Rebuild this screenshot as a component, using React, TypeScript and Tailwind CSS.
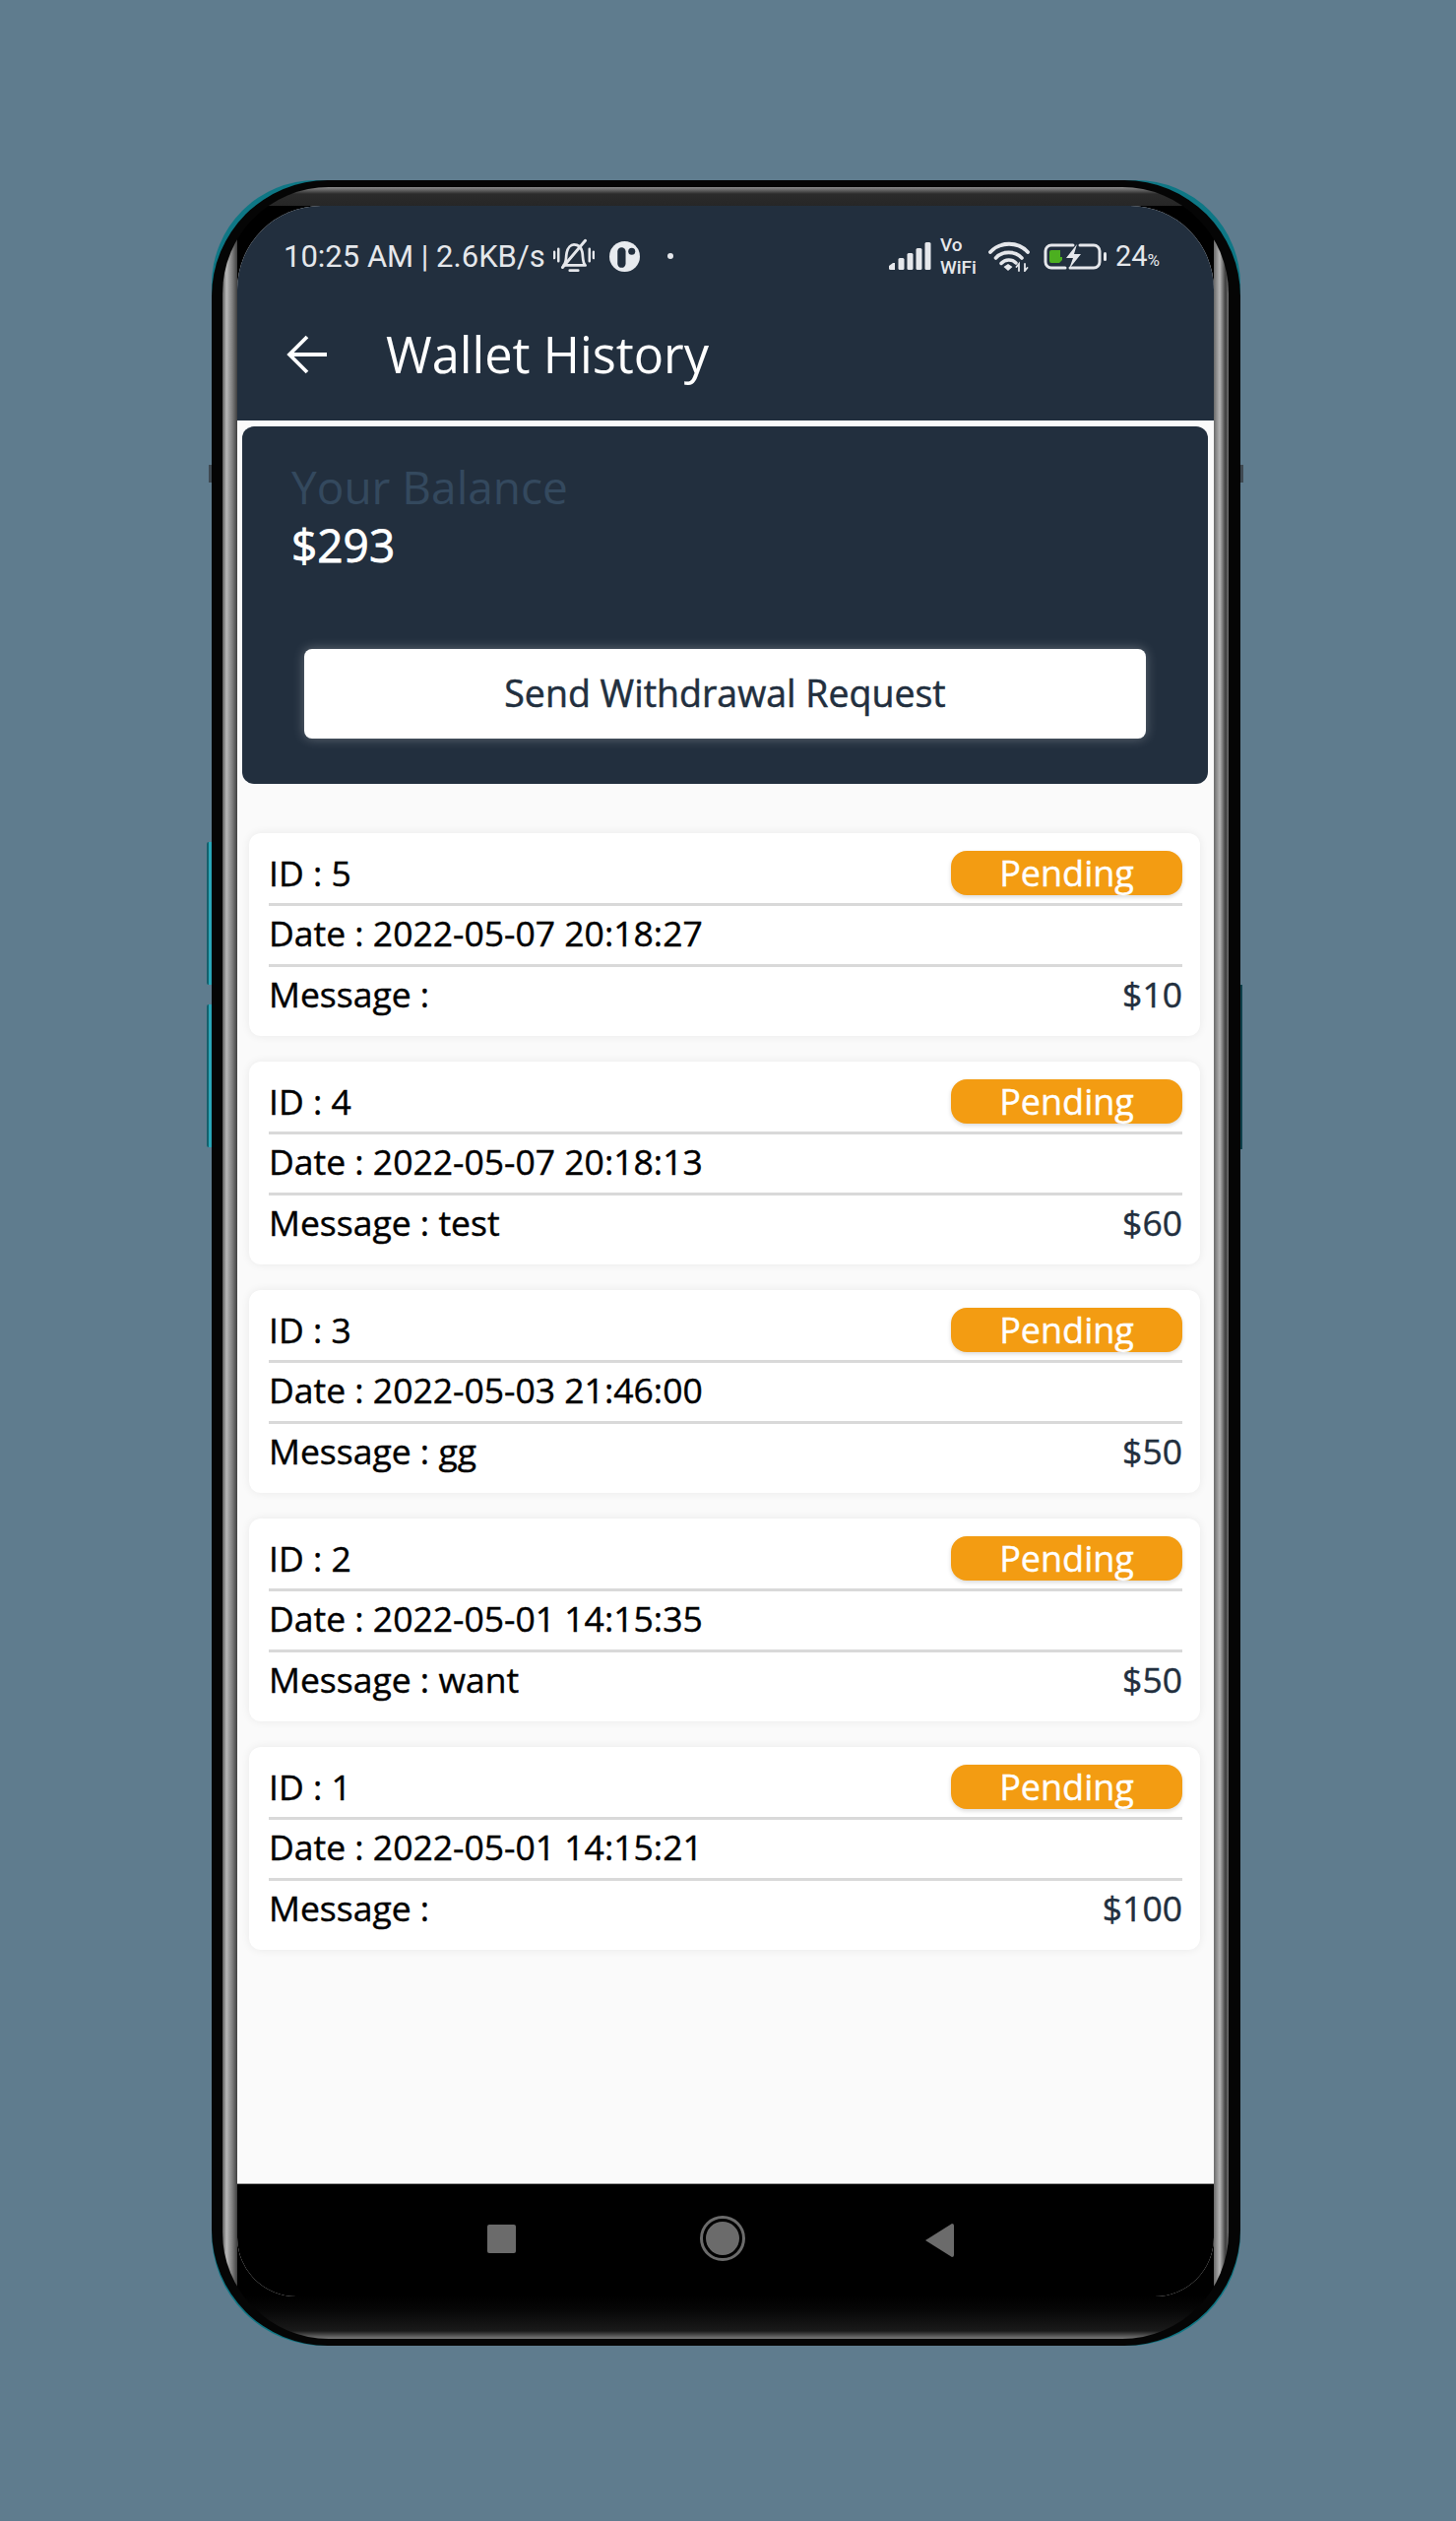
const withdrawals = [
  { id: 5, date: '2022-05-07 20:18:27', message: '', amount: '$10' },
  { id: 4, date: '2022-05-07 20:18:13', message: 'test', amount: '$60' },
  { id: 3, date: '2022-05-03 21:46:00', message: 'gg', amount: '$50' },
  { id: 2, date: '2022-05-01 14:15:35', message: 'want', amount: '$50' },
  { id: 1, date: '2022-05-01 14:15:21', message: '', amount: '$100' },
];

const BellMuted = () => (
  <svg width="42" height="36" viewBox="0 0 40 34" fill="none" stroke="#e5e7eb" strokeLinecap="round">
    {/* vibration marks */}
    <path d="M1 13v6M5 10v12M35 10v12M39 13v6" strokeWidth="2.4" />
    {/* bell */}
    <path d="M10 26c3-3 2-7 3-12 1-5 4-8 7-8 4 0 7 3 8 7 1 5 0 10 3 13z" strokeWidth="2.6" strokeLinejoin="round" />
    <path d="M16 31h8" strokeWidth="2.6" />
    <path d="M9 28 31 2" strokeWidth="2.8" />
  </svg>
);

const AppBadge = () => (
  <svg width="31" height="31" viewBox="0 0 30 30">
    <circle cx="15" cy="15" r="15" fill="#e8ebef" />
    <rect x="8" y="6" width="8" height="20" rx="4" fill="#222f3e" />
    <circle cx="22" cy="10" r="3.4" fill="#222f3e" />
  </svg>
);

const SignalBars = () => (
  <svg width="43" height="28" viewBox="0 0 43 28" fill="#e5e7eb">
    <path d="M0 24 4 21h2v7H1.500Q0 28 0 26.500z" />
    <rect x="9.500" y="16" width="6" height="12" rx="1.500" />
    <rect x="18.500" y="11" width="6" height="17" rx="1.500" />
    <rect x="27.500" y="6" width="6" height="22" rx="1.500" />
    <rect x="36.500" y="0" width="6" height="28" rx="1.500" />
  </svg>
);

const WifiIcon = () => (
  <svg width="42" height="31" viewBox="0 0 42 31" fill="none" stroke="#e5e7eb" strokeLinecap="round">
    <path d="M2 11C12 0 30 0 40 11" strokeWidth="3.800" />
    <path d="M7.500 17C14 9.500 27 9.500 34 17" strokeWidth="3.600" />
    <path d="M13 22.500C17 18 24 18 28 22" strokeWidth="3.400" />
    <path d="M15.500 26 20 23l4.500 3-4.500 4z" fill="#e5e7eb" stroke="none" />
    <path d="M31 30v-7l-2.500 3M37 23v7l2.500-3" strokeWidth="1.800" />
  </svg>
);

const BatteryIcon = () => (
  <svg width="64" height="27" viewBox="0 0 64 27" fill="none">
    <path d="M22 25H8a6 6 0 0 1-6-6V8a6 6 0 0 1 6-6h22" stroke="#e5e7eb" strokeWidth="3" strokeLinecap="round" />
    <path d="M37 2h14a6 6 0 0 1 6 6v11a6 6 0 0 1-6 6H27" stroke="#e5e7eb" strokeWidth="3" strokeLinecap="round" />
    <path d="M6 9a2 2 0 0 1 2-2h9v7h2v3l-3 3H8a2 2 0 0 1-2-2z" fill="#4caf20" />
    <path d="M34 1 23 15h7l-4 11 12-15h-7z" fill="#e5e7eb" />
    <rect x="61" y="9" width="3" height="9" rx="1.500" fill="#e5e7eb" />
  </svg>
);

const StatusBar = () => (
  <div className="flex h-[102px] items-center justify-between pl-[47px] pr-[55px] font-['Roboto',sans-serif] text-[#e5e7eb]">
    <div className="flex items-center">
      <span className="text-[31px] leading-none">10:25 AM | 2.6KB/s</span>
      <span className="ml-[8px] flex">
        <BellMuted />
      </span>
      <span className="ml-[15px] flex">
        <AppBadge />
      </span>
      <span className="ml-[28px] h-[6px] w-[6px] rounded-full bg-[#e5e7eb]" />
    </div>
    <div className="flex items-center">
      <SignalBars />
      <span className="ml-[9px] flex w-[40px] flex-col text-[19px] leading-[23px] font-medium">
        <span>Vo</span>
        <span>WiFi</span>
      </span>
      <span className="ml-[9px] flex">
        <WifiIcon />
      </span>
      <span className="ml-[14px] flex">
        <BatteryIcon />
      </span>
      <span className="ml-[9px] text-[29px] leading-none">
        24<span className="text-[17px]">%</span>
      </span>
    </div>
  </div>
);

const AppBar = () => (
  <div className="flex h-[116px] items-center pb-[18px] pl-[50px]">
    <svg width="42" height="40" viewBox="0 0 42 40" fill="none" stroke="#fff" strokeWidth="3.800">
      <path d="M41 20H3M21 2 3 20l18 18" />
    </svg>
    <h1 className="ml-[59px] text-[50.500px] leading-none font-normal text-white">Wallet History</h1>
  </div>
);

const BalanceCard = () => (
  <div className="mt-[6px] mr-[6px] ml-[5px] flex h-[363px] flex-col rounded-[12px] bg-[#222f3e] px-[50px]">
    <p className="mt-[36px] text-[46px] leading-[50px] text-[#34495e]">Your Balance</p>
    <p className="mt-[4px] text-[46px] leading-[60px] text-white [-webkit-text-stroke:0.8px_#fff]">$293</p>
    <button className="mt-[76px] ml-[13px] flex h-[91px] w-[855px] items-center justify-center rounded-[8px] bg-white text-[37.500px] text-[#222f3e] shadow-[0_0_12px_rgba(255,255,255,0.3)] [-webkit-text-stroke:0.5px_#222f3e]">
      Send Withdrawal Request
    </button>
  </div>
);

type Withdrawal = (typeof withdrawals)[number];

const HistoryCard = ({ item }: { item: Withdrawal }) => (
  <div className="flex h-[206px] flex-col rounded-[12px] bg-white pr-[18px] pl-[20px] text-[35.500px] leading-none shadow-[0_0_10px_rgba(0,0,0,0.07)] [-webkit-text-stroke:0.4px_currentColor]">
    <div className="flex h-[74px] items-start justify-between border-b-[3px] border-[#d9d9d9] pt-[18px]">
      <span className="leading-[45px] text-black">ID : {item.id}</span>
      <span className="flex h-[45px] w-[235px] items-center justify-center rounded-[16px] bg-[#f39c12] text-[36px] leading-none text-white shadow-[0_2px_4px_rgba(0,0,0,0.15)]">
        Pending
      </span>
    </div>
    <div className="flex h-[62px] items-center border-b-[3px] border-[#d9d9d9] pb-[3px] text-black">
      Date : {item.date}
    </div>
    <div className="flex h-[60px] items-center justify-between pb-[5px]">
      <span className="text-black">Message : {item.message}</span>
      <span className="text-[#222f3e]">{item.amount}</span>
    </div>
  </div>
);

const NavBar = () => (
  <div className="mt-auto flex h-[115px] border-t border-[#999] bg-black">
    <div className="relative flex w-full items-start pt-[40px] pl-[254px]">
      <div className="mt-[1px] h-[29px] w-[29px] rounded-[2px] bg-[#6b6b6b]" />
      <div className="ml-[187px] flex h-[46px] w-[46px] -translate-y-[8px] items-center justify-center rounded-full border-[3px] border-[#6b6b6b]">
        <div className="h-[34px] w-[34px] rounded-full bg-[#6b6b6b]" />
      </div>
      <svg className="ml-[183px]" width="30" height="34" viewBox="0 0 30 34" fill="#6b6b6b">
        <path d="M0 17 27 0a2 2 0 0 1 2 2v30a2 2 0 0 1-2 2z" />
      </svg>
    </div>
  </div>
);

export default function App() {
  return (
    <div className="flex min-h-[2560px] items-start bg-[#5f7c8e] pt-[183px] pl-[215px] font-['Open_Sans',sans-serif]">
      <div className="relative h-[2199px] w-[1045px]">
        {/* teal back shell that peeks out around the corners */}
        <div className="absolute inset-0 rounded-t-[106px] rounded-b-[114px] bg-[#0e7785]" />
        {/* side buttons */}
        <div className="absolute top-[672px] -left-[5px] h-[145px] w-[5px] rounded-l-[2px] border-l-2 border-[#14606c] bg-[#2aa6b8]" />
        <div className="absolute top-[837px] -left-[5px] h-[145px] w-[5px] rounded-l-[2px] border-l-2 border-[#14606c] bg-[#2aa6b8]" />
        <div className="absolute top-[817px] -right-[2px] h-[167px] w-[2px] bg-[#0d3f4a]" />
        <div className="absolute top-[289px] -left-[3px] h-[18px] w-[3px] bg-[#3f4a52]" />
        <div className="absolute top-[289px] -right-[3px] h-[18px] w-[3px] bg-[#3f4a52]" />

        <div className="relative h-full rounded-[118px] bg-[#050505] pt-[7px] pr-[12px] pb-[7px] pl-[11px]">
          <div className="h-full rounded-[108px] bg-[linear-gradient(180deg,#8c8c8c_0px,#2b2b2b_7px,#262626_19px,transparent_19px),linear-gradient(0deg,#7a7a7a_0px,#1a1a1a_8px,#060606_30px,#000_43px,transparent_43px),linear-gradient(90deg,#5a5a5a_0px,#b8b8b8_4px,#7d7d7d_10px,#3f3f3f_15px,#000_15px,#000_1007px,#6a6a6a_1007px,#b4b4b4_1013px,#3a3a3a_1019px,#777_1022px)] pt-[19px] pr-[15px] pb-[43px] pl-[15px]">
            <div className="flex h-full flex-col overflow-hidden rounded-t-[85px] rounded-b-[60px] bg-[#fafafa]">
              <div className="bg-[#222f3e]">
                <StatusBar />
                <AppBar />
              </div>
              <BalanceCard />
              <div className="mt-[50px] mr-[14px] ml-[12px] flex flex-col gap-[26px]">
                {withdrawals.map((item) => (
                  <HistoryCard key={item.id} item={item} />
                ))}
              </div>
              <NavBar />
            </div>
          </div>
        </div>
      </div>
    </div>
  );
}
